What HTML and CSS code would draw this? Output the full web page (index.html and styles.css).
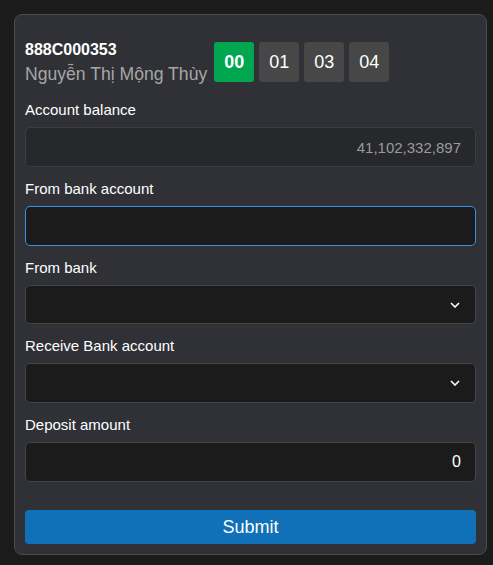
FILE: index.html
```html
<!DOCTYPE html>
<html>
<head>
<meta charset="utf-8">
<link rel="stylesheet" href="styles.css">
</head>
<body>
<div class="card">
  <div class="header">
    <div class="who">
      <div class="acct">888C000353</div>
      <div class="name">Nguyễn Thị Mộng Thùy</div>
    </div>
    <div class="badges">
      <span class="badge active">00</span>
      <span class="badge">01</span>
      <span class="badge">03</span>
      <span class="badge">04</span>
    </div>
  </div>

  <div class="group">
    <div class="label">Account balance</div>
    <div class="field disabled">41,102,332,897</div>
  </div>
  <div class="group">
    <div class="label">From bank account</div>
    <div class="field focus"></div>
  </div>
  <div class="group">
    <div class="label">From bank</div>
    <div class="field select select-short">
      <svg class="chev" width="10" height="6" viewBox="0 0 10 6"><path d="M1 1l4 4 4-4" fill="none" stroke="#fff" stroke-width="1.6"/></svg>
    </div>
  </div>
  <div class="group">
    <div class="label">Receive Bank account</div>
    <div class="field select">
      <svg class="chev" width="10" height="6" viewBox="0 0 10 6"><path d="M1 1l4 4 4-4" fill="none" stroke="#fff" stroke-width="1.6"/></svg>
    </div>
  </div>
  <div class="group last">
    <div class="label">Deposit amount</div>
    <div class="field amount">0</div>
  </div>
  <button class="submit">Submit</button>
</div>
</body>
</html>
```

FILE: styles.css
```css
html, body {
  margin: 0;
  padding: 0;
  background: #1b1b1b;
  font-family: "Liberation Sans", Arial, sans-serif;
  color: #fff;
}
body {
  padding: 14px 6px 10px 14px;
}
.card {
  width: 451px;
  background: #303136;
  border: 1px solid #4a4a4f;
  border-radius: 8px;
  padding: 24px 10px 10px 10px;
}
.header {
  display: flex;
  align-items: flex-end;
  gap: 7px;
  margin-bottom: 15px;
}
.acct {
  font-size: 16px;
  font-weight: bold;
  line-height: 22px;
}
.name {
  font-size: 17.6px;
  line-height: 26px;
  color: #a6a6a6;
  margin-bottom: -2px;
}
.badges {
  display: flex;
  gap: 5px;
  margin-bottom: 3px;
}
.badge {
  width: 40px;
  height: 40px;
  display: flex;
  align-items: center;
  justify-content: center;
  background: #474747;
  border-radius: 3px;
  font-size: 18px;
}
.badge.active {
  background: #00a650;
  font-weight: bold;
}
.group {
  margin-bottom: 12px;
}
.group.last {
  margin-bottom: 28px;
}
.label {
  font-size: 15px;
  line-height: 20px;
  margin-bottom: 7px;
}
.field {
  box-sizing: border-box;
  height: 40px;
  background: #1b1b1b;
  border: 1px solid #454548;
  border-radius: 5px;
  display: flex;
  align-items: center;
  justify-content: flex-end;
  padding: 0 14px;
  font-size: 15px;
  color: #fff;
}
.field.amount {
  font-size: 16px;
}
.field.disabled {
  background: #27282c;
  border-color: #3c3d41;
  color: #9a9a9a;
}
.field.focus {
  border-color: #3b8fe3;
}
.field.select-short {
  height: 39px;
}
.chev {
  display: block;
  margin-right: 1px;
}
.submit {
  display: block;
  width: 100%;
  height: 34px;
  border: none;
  border-radius: 4px;
  background: #1070b8;
  color: #fff;
  font-family: "Liberation Sans", Arial, sans-serif;
  font-size: 18px;
  padding: 0;
}
```
